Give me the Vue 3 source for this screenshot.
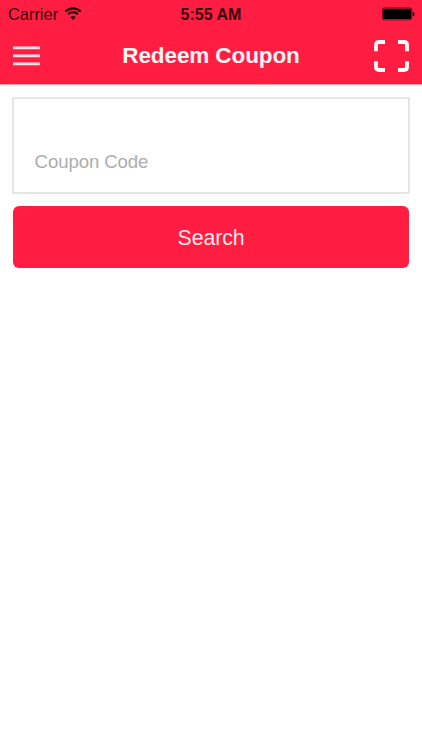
<script setup>
import { ref } from 'vue'

const code = ref('')
</script>

<template>
  <div class="screen">
    <header class="header">
      <div class="status">
        <div class="network">
          <span class="carrier">Carrier</span>
          <svg class="wifi" width="18" height="14" viewBox="0 0 18 14">
            <path d="M1.4 4.6 A10.5 10.5 0 0 1 16.6 4.6" />
            <path d="M4.1 7.3 A6.8 6.8 0 0 1 13.9 7.3" />
            <path class="dot" d="M9 12.9 L6.3 10.2 A3.9 3.9 0 0 1 11.7 10.2 Z" />
          </svg>
        </div>
        <span class="time">5:55 AM</span>
        <svg class="battery" width="34" height="14" viewBox="0 0 34 14">
          <rect class="case" x="0.6" y="0.9" width="29.2" height="12" rx="1.4" />
          <rect x="1.3" y="1.7" width="27.8" height="10.4" rx="0.6" />
          <path d="M30.6 4.6 Q32.6 5.2 32.6 6.9 Q32.6 8.6 30.6 9.2 Z" />
        </svg>
      </div>
      <div class="navbar">
        <button class="icon-button" aria-label="Menu">
          <svg class="menu" width="27" height="20" viewBox="0 0 27 20">
            <path d="M0 1.8H27M0 9.8H27M0 17.8H27" />
          </svg>
        </button>
        <h1 class="title">Redeem Coupon</h1>
        <button class="icon-button scan-button" aria-label="Scan">
          <svg class="scan" width="36" height="33" viewBox="0 0 36 33">
            <path d="M2 11.2V5Q2 2 5 2H11M24 2H30Q33 2 33 5V11.2M33 21.2V27Q33 30 30 30H24M11 30H5Q2 30 2 27V21.2" />
          </svg>
        </button>
      </div>
    </header>
    <main class="content">
      <label class="field">
        <input v-model="code" class="input" type="text" placeholder="Coupon Code" />
      </label>
      <button class="search">Search</button>
    </main>
  </div>
</template>

<style>
body {
  margin: 0;
  background: #fff;
}
</style>

<style scoped>
.screen {
  width: 100%;
  height: 750px;
  overflow: hidden;
  background: #fff;
  font-family: "Liberation Sans", Arial, sans-serif;
}
.header {
  box-sizing: border-box;
  height: 85px;
  background: #ff1e42;
  border-bottom: 1px solid #ff9bab;
}
.status {
  display: grid;
  grid-template-columns: 1fr auto 1fr;
  align-items: center;
  height: 28px;
  padding: 0 6px 0 8px;
  color: #35040c;
}
.network {
  display: flex;
  align-items: center;
  gap: 6px;
}
.carrier {
  font-size: 16.4px;
  line-height: 28px;
}
.wifi {
  margin-top: -1px;
  fill: none;
  stroke: #2a0008;
  stroke-width: 2.2;
}
.wifi .dot {
  fill: #2a0008;
  stroke: none;
}
.time {
  padding: 1px 2px 0 0;
  font-size: 16px;
  line-height: 27px;
  font-weight: bold;
}
.battery {
  justify-self: end;
  fill: #000;
}
.battery .case {
  fill: none;
  stroke: #7d0e20;
  stroke-width: 1;
}
.navbar {
  display: grid;
  grid-template-columns: 60px 1fr 60px;
  align-items: center;
  height: 56px;
  padding: 0 12px 0 13px;
}
.icon-button {
  display: flex;
  padding: 0;
  border: 0;
  background: none;
}
.scan-button {
  justify-self: end;
}
.menu {
  fill: none;
  stroke: #ffe3e8;
  stroke-width: 2.7;
}
.scan {
  fill: none;
  stroke: #fff;
  stroke-width: 3.8;
}
.title {
  margin: 0;
  padding-right: 1px;
  text-align: center;
  font-size: 22.5px;
  line-height: 56px;
  font-weight: bold;
  letter-spacing: -0.1px;
  color: #fff5f7;
}
.content {
  display: flex;
  flex-direction: column;
  gap: 12px;
  padding: 12px 12px 0;
}
.field {
  display: flex;
  align-items: flex-end;
  box-sizing: border-box;
  height: 97px;
  padding: 0 20px 15px 20.6px;
  border: 2px solid #e6e6e6;
}
.input {
  width: 100%;
  height: 30px;
  padding: 0;
  border: 0;
  outline: 0;
  background: none;
  font-family: inherit;
  font-size: 18.6px;
  letter-spacing: -0.1px;
  color: #333;
}
.input::placeholder {
  color: #adadad;
  opacity: 1;
}
.search {
  height: 62px;
  margin: 0 1px;
  padding: 2px 0 0;
  border: 0;
  border-radius: 6px;
  background: #ff1e42;
  font-family: inherit;
  font-size: 21.3px;
  letter-spacing: -0.1px;
  color: #ffe6ea;
}
</style>
